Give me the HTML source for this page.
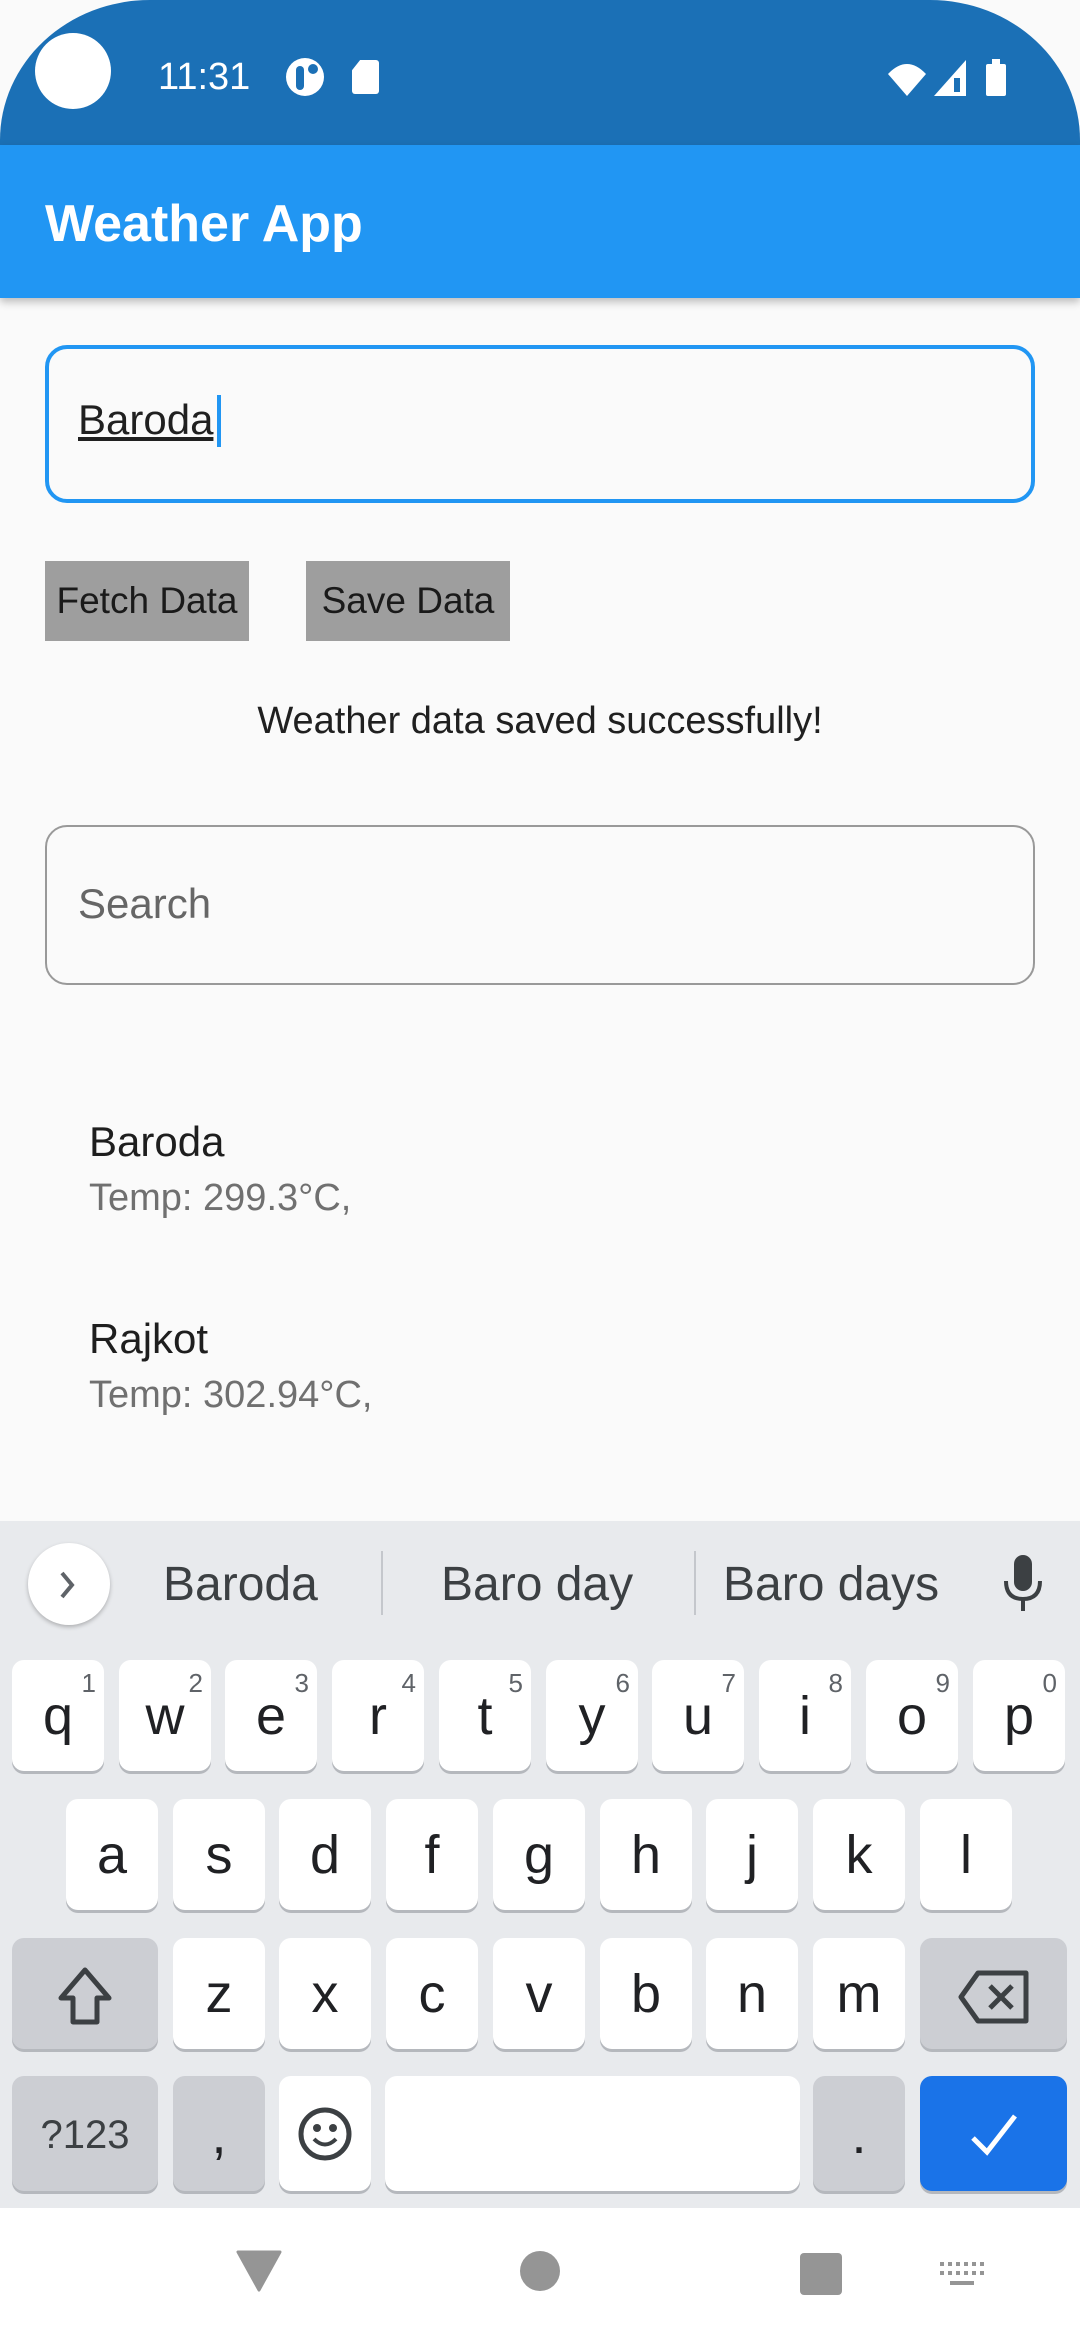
<!DOCTYPE html>
<html><head><meta charset="utf-8"><style>
*{margin:0;padding:0;box-sizing:border-box}
body{width:1080px;height:2340px;position:relative;overflow:hidden;background:#fafafa;font-family:"Liberation Sans",sans-serif}
.a{position:absolute}
.k{position:absolute;background:#fff;border-radius:12px;box-shadow:0 3px 0 #b5b8bd;color:#202124;font-size:54px;text-align:center;line-height:112px;height:111px;width:92px}
.k sup{position:absolute;right:8px;top:10px;font-size:26px;line-height:26px;color:#5f6368}
.g{background:#ccced3}
.t{white-space:nowrap}
</style></head><body>
<div class="a" style="left:0;top:0;width:1080px;height:150px;background:#1b70b6;border-radius:150px 150px 0 0/140px 140px 0 0"></div>
<div class="a" style="left:35px;top:33px;width:76px;height:76px;border-radius:50%;background:#fff"></div>
<div class="a t" style="left:158px;top:57px;font-size:38px;color:#fff;line-height:40px">11:31</div>
<div class="a" style="left:286px;top:58px;width:38px;height:38px;border-radius:50%;background:#fff"></div>
<div class="a" style="left:296px;top:66px;width:8px;height:24px;background:#1b70b6;border-radius:4px"></div>
<div class="a" style="left:308px;top:64px;width:10px;height:10px;background:#1b70b6;border-radius:50%"></div>
<div class="a" style="left:352px;top:60px;width:27px;height:34px;background:#fff;border-radius:3px;clip-path:polygon(30% 0,100% 0,100% 100%,0 100%,0 30%)"></div>
<svg class="a" style="left:886px;top:58px" width="130" height="40"><path d="M2 16 Q21 -4 40 16 L21 38 Z" fill="#fff"/><path d="M48 38 L80 2 L80 38 Z" fill="#fff"/><rect x="68" y="20" width="6" height="14" fill="#1b70b6"/><rect x="100" y="6" width="20" height="32" rx="2" fill="#fff"/><rect x="106" y="1" width="8" height="6" fill="#fff"/></svg>
<div class="a" style="left:0;top:145px;width:1080px;height:153px;background:#2196f3;box-shadow:0 4px 8px rgba(0,0,0,.25)"></div>
<div class="a t" style="left:45px;top:194px;font-size:52px;color:#fff;font-weight:bold;line-height:60px">Weather App</div>

<div class="a" style="left:45px;top:345px;width:990px;height:158px;border:4px solid #2196f3;border-radius:22px"></div>
<div class="a t" style="left:78px;top:395px;font-size:42px;color:#202020;text-decoration:underline;line-height:50px">Baroda</div>
<div class="a" style="left:217px;top:395px;width:4px;height:52px;background:#2196f3"></div>

<div class="a t" style="left:45px;top:561px;width:204px;height:80px;background:#9e9e9e;font-size:37px;line-height:80px;text-align:center;color:#1a1a1a">Fetch Data</div>
<div class="a t" style="left:306px;top:561px;width:204px;height:80px;background:#9e9e9e;font-size:37px;line-height:80px;text-align:center;color:#1a1a1a">Save Data</div>
<div class="a t" style="left:0;top:697px;width:1080px;text-align:center;font-size:38px;color:#202020;line-height:48px">Weather data saved successfully!</div>

<div class="a" style="left:45px;top:825px;width:990px;height:160px;border:2px solid #999;border-radius:22px"></div>
<div class="a t" style="left:78px;top:879px;font-size:42px;color:#666;line-height:50px">Search</div>

<div class="a t" style="left:89px;top:1117px;font-size:42px;color:#1e1e1e;line-height:50px">Baroda</div>
<div class="a t" style="left:89px;top:1176px;font-size:38px;color:#707070;line-height:44px">Temp: 299.3°C,</div>
<div class="a t" style="left:89px;top:1314px;font-size:42px;color:#1e1e1e;line-height:50px">Rajkot</div>
<div class="a t" style="left:89px;top:1373px;font-size:38px;color:#707070;line-height:44px">Temp: 302.94°C,</div>

<div class="a" style="left:0;top:1521px;width:1080px;height:688px;background:#e8eaed"></div>
<div class="a" style="left:28px;top:1543px;width:82px;height:82px;border-radius:50%;background:#fff;box-shadow:0 2px 4px rgba(0,0,0,.25)"></div>
<svg class="a" style="left:56px;top:1570px" width="24" height="30"><path d="M6 3 L16 15 L6 27" stroke="#5f6368" stroke-width="4" fill="none"/></svg>
<div class="a t" style="left:163px;top:1559px;font-size:48px;color:#3c4043;line-height:52px">Baroda</div>
<div class="a" style="left:381px;top:1551px;width:2px;height:64px;background:#c4c7cc"></div>
<div class="a t" style="left:441px;top:1559px;font-size:48px;color:#3c4043;line-height:52px">Baro day</div>
<div class="a" style="left:694px;top:1551px;width:2px;height:64px;background:#c4c7cc"></div>
<div class="a t" style="left:723px;top:1559px;font-size:48px;color:#3c4043;line-height:52px">Baro days</div>
<svg class="a" style="left:1000px;top:1555px" width="46" height="60"><rect x="14" y="0" width="18" height="36" rx="9" fill="#3c4043"/><path d="M6 26 Q6 44 23 44 Q40 44 40 26" stroke="#3c4043" stroke-width="4" fill="none"/><rect x="21" y="44" width="4" height="12" fill="#3c4043"/></svg>

<div class="k" style="left:12px;top:1660px">q<sup>1</sup></div>
<div class="k" style="left:119px;top:1660px">w<sup>2</sup></div>
<div class="k" style="left:225px;top:1660px">e<sup>3</sup></div>
<div class="k" style="left:332px;top:1660px">r<sup>4</sup></div>
<div class="k" style="left:439px;top:1660px">t<sup>5</sup></div>
<div class="k" style="left:546px;top:1660px">y<sup>6</sup></div>
<div class="k" style="left:652px;top:1660px">u<sup>7</sup></div>
<div class="k" style="left:759px;top:1660px">i<sup>8</sup></div>
<div class="k" style="left:866px;top:1660px">o<sup>9</sup></div>
<div class="k" style="left:973px;top:1660px">p<sup>0</sup></div>

<div class="k" style="left:66px;top:1799px">a</div>
<div class="k" style="left:173px;top:1799px">s</div>
<div class="k" style="left:279px;top:1799px">d</div>
<div class="k" style="left:386px;top:1799px">f</div>
<div class="k" style="left:493px;top:1799px">g</div>
<div class="k" style="left:600px;top:1799px">h</div>
<div class="k" style="left:706px;top:1799px">j</div>
<div class="k" style="left:813px;top:1799px">k</div>
<div class="k" style="left:920px;top:1799px">l</div>

<div class="k g" style="left:12px;top:1938px;width:146px"><svg style="margin-top:28px" width="56" height="60"><path d="M28 4 L52 32 L40 32 L40 56 L16 56 L16 32 L4 32 Z" stroke="#3c4043" stroke-width="5" fill="none" stroke-linejoin="round"/></svg></div>
<div class="k" style="left:173px;top:1938px">z</div>
<div class="k" style="left:279px;top:1938px">x</div>
<div class="k" style="left:386px;top:1938px">c</div>
<div class="k" style="left:493px;top:1938px">v</div>
<div class="k" style="left:600px;top:1938px">b</div>
<div class="k" style="left:706px;top:1938px">n</div>
<div class="k" style="left:813px;top:1938px">m</div>
<div class="k g" style="left:920px;top:1938px;width:147px"><svg style="margin-top:32px" width="72" height="54"><path d="M20 3 L68 3 L68 51 L20 51 L3 27 Z" stroke="#3c4043" stroke-width="5" fill="none" stroke-linejoin="round"/><path d="M32 16 L54 38 M54 16 L32 38" stroke="#3c4043" stroke-width="5"/></svg></div>

<div class="k g" style="left:12px;top:2076px;width:146px;height:115px;font-size:40px;line-height:118px;color:#3c4043">?123</div>
<div class="k g" style="left:173px;top:2076px;height:115px;line-height:118px">,</div>
<div class="k" style="left:279px;top:2076px;height:115px"><svg style="margin-top:30px" width="56" height="56"><circle cx="28" cy="28" r="24" stroke="#3c4043" stroke-width="5" fill="none"/><circle cx="20" cy="22" r="4" fill="#3c4043"/><circle cx="36" cy="22" r="4" fill="#3c4043"/><path d="M17 33 Q28 44 39 33" stroke="#3c4043" stroke-width="4" fill="none"/></svg></div>
<div class="k" style="left:385px;top:2076px;width:415px;height:115px"></div>
<div class="k g" style="left:813px;top:2076px;height:115px;line-height:118px">.</div>
<div class="k" style="left:920px;top:2076px;width:147px;height:115px;background:#1a73e8"><svg style="margin-top:36px" width="50" height="46"><path d="M4 26 L18 40 L46 4" stroke="#fff" stroke-width="5" fill="none"/></svg></div>

<div class="a" style="left:0;top:2208px;width:1080px;height:132px;background:#fff"></div>
<svg class="a" style="left:236px;top:2250px" width="46" height="42"><path d="M2 2 L44 2 L23 40 Z" fill="#959595" stroke="#959595" stroke-width="3" stroke-linejoin="round"/></svg>
<div class="a" style="left:520px;top:2251px;width:40px;height:40px;border-radius:50%;background:#959595"></div>
<div class="a" style="left:800px;top:2253px;width:42px;height:42px;border-radius:4px;background:#959595"></div>
<svg class="a" style="left:940px;top:2262px" width="44" height="26"><g fill="#959595"><rect x="0" y="0" width="4" height="4"/><rect x="8" y="0" width="4" height="4"/><rect x="16" y="0" width="4" height="4"/><rect x="24" y="0" width="4" height="4"/><rect x="32" y="0" width="4" height="4"/><rect x="40" y="0" width="4" height="4"/><rect x="0" y="9" width="4" height="4"/><rect x="8" y="9" width="4" height="4"/><rect x="16" y="9" width="4" height="4"/><rect x="24" y="9" width="4" height="4"/><rect x="32" y="9" width="4" height="4"/><rect x="40" y="9" width="4" height="4"/><rect x="10" y="19" width="24" height="4"/></g></svg>
</body></html>
